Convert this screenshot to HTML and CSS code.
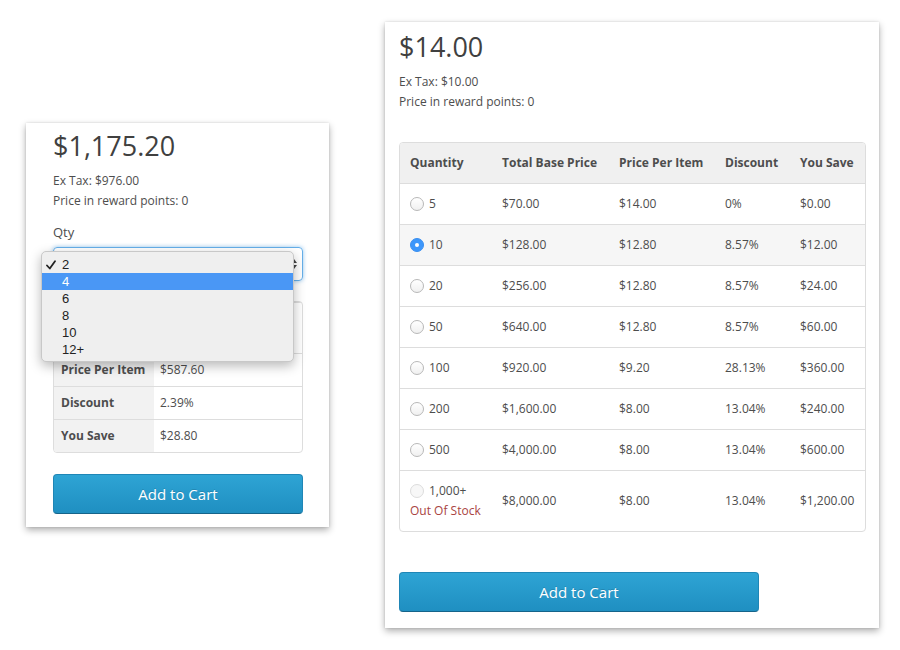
FILE: index.html
```html
<!DOCTYPE html>
<html>
<head>
<meta charset="utf-8">
<link rel="stylesheet" href="styles.css">
</head>
<body>
<div class="page">
  <div class="card card-left">
    <div class="price">$1,175.20</div>
    <div class="meta">Ex Tax: $976.00</div>
    <div class="meta">Price in reward points: 0</div>
    <div class="qty-label">Qty</div>
    <div class="select-wrap">
      <div class="select">
        <span class="select-val"></span>
        <svg class="select-arrows" width="8" height="12" viewBox="0 0 8 12"><path d="M4 1 L7 5 L1 5 Z M4 11 L7 7 L1 7 Z" fill="#444"/></svg>
      </div>
      <ul class="menu">
        <li class="menu-item"><svg class="check" width="10" height="10" viewBox="0 0 10 10"><path d="M1 5.5 L3.8 8.5 L9 1.2" fill="none" stroke="#222" stroke-width="1.8" stroke-linecap="round" stroke-linejoin="round"/></svg>2</li>
        <li class="menu-item active">4</li>
        <li class="menu-item">6</li>
        <li class="menu-item">8</li>
        <li class="menu-item">10</li>
        <li class="menu-item">12+</li>
      </ul>
    </div>
    <div class="tbl-wrap side-tbl">
      <table>
        <tr class="first"><th>Total Base Price</th><td>$1,204.00</td></tr>
        <tr><th>Price Per Item</th><td>$587.60</td></tr>
        <tr><th>Discount</th><td>2.39%</td></tr>
        <tr><th>You Save</th><td>$28.80</td></tr>
      </table>
    </div>
    <button class="btn btn-full">Add to Cart</button>
  </div>

  <div class="card card-right">
    <div class="price">$14.00</div>
    <div class="meta">Ex Tax: $10.00</div>
    <div class="meta">Price in reward points: 0</div>
    <div class="tbl-wrap tier-tbl">
      <table>
        <thead>
          <tr><th class="c1">Quantity</th><th class="c2">Total Base Price</th><th class="c3">Price Per Item</th><th class="c4">Discount</th><th class="c5">You Save</th></tr>
        </thead>
        <tbody>
          <tr><td><span class="q"><span class="radio"></span>5</span></td><td>$70.00</td><td>$14.00</td><td>0%</td><td>$0.00</td></tr>
          <tr class="sel"><td><span class="q"><span class="radio checked"></span>10</span></td><td>$128.00</td><td>$12.80</td><td>8.57%</td><td>$12.00</td></tr>
          <tr><td><span class="q"><span class="radio"></span>20</span></td><td>$256.00</td><td>$12.80</td><td>8.57%</td><td>$24.00</td></tr>
          <tr><td><span class="q"><span class="radio"></span>50</span></td><td>$640.00</td><td>$12.80</td><td>8.57%</td><td>$60.00</td></tr>
          <tr><td><span class="q"><span class="radio"></span>100</span></td><td>$920.00</td><td>$9.20</td><td>28.13%</td><td>$360.00</td></tr>
          <tr><td><span class="q"><span class="radio"></span>200</span></td><td>$1,600.00</td><td>$8.00</td><td>13.04%</td><td>$240.00</td></tr>
          <tr><td><span class="q"><span class="radio"></span>500</span></td><td>$4,000.00</td><td>$8.00</td><td>13.04%</td><td>$600.00</td></tr>
          <tr><td><span class="q"><span class="radio disabled"></span>1,000+</span><span class="oos">Out Of Stock</span></td><td>$8,000.00</td><td>$8.00</td><td>13.04%</td><td>$1,200.00</td></tr>
        </tbody>
      </table>
    </div>
    <button class="btn btn-wide">Add to Cart</button>
  </div>
</div>
</body>
</html>
```

FILE: styles.css
```css
* { box-sizing: border-box; }
html, body { margin: 0; padding: 0; background: #fff; }
body { font-family: "Open Sans", "DejaVu Sans", sans-serif; color: #4d4d4d; }

.page {
  display: flex;
  align-items: flex-start;
  padding-left: 26px;
  padding-bottom: 12px;
}

.card {
  background: #fff;
  box-shadow: 0 3px 7px rgba(0,0,0,0.32), 0 0 2px rgba(0,0,0,0.12);
}
.card-left {
  width: 303px;
  margin-top: 123px;
  padding: 6px 26px 13px 27px;
}
.card-right {
  width: 494px;
  margin-top: 22px;
  margin-left: 56px;
  padding: 8px 13px 16px 14px;
}

.price {
  font-size: 27px;
  line-height: 34px;
  color: #404040;
  margin-bottom: 8px;
}
.meta {
  font-size: 12px;
  line-height: 20px;
  color: #4d4d4d;
}
.qty-label {
  font-size: 13px;
  line-height: 20px;
  margin-top: 11px;
  color: #4d4d4d;
}

.select-wrap {
  position: relative;
  margin-top: 5px;
}
.select {
  height: 34px;
  border: 1px solid #66afe9;
  border-radius: 4px;
  box-shadow: 0 0 4px rgba(102,175,233,0.7);
  display: flex;
  align-items: center;
  justify-content: space-between;
  padding: 0 4px 0 12px;
  font-family: "Liberation Sans", sans-serif;
  font-size: 13px;
  color: #333;
}
.select-arrows { display: block; }

.menu {
  position: absolute;
  left: -12px;
  top: 4px;
  width: 253px;
  margin: 0;
  padding: 4px 0 3px;
  list-style: none;
  background: #efefef;
  border: 1px solid #c8c8c8;
  border-radius: 5px;
  box-shadow: 0 4px 12px rgba(0,0,0,0.28);
  font-family: "Liberation Sans", "Helvetica", sans-serif;
  font-size: 13px;
  color: #222;
}
.menu-item {
  position: relative;
  height: 17px;
  line-height: 17px;
  padding-left: 20px;
}
.menu-item.active {
  background: #4a97f5;
  color: #fff;
}
.check {
  position: absolute;
  left: 4px;
  top: 4px;
}

.tbl-wrap {
  border: 1px solid #ddd;
  border-radius: 4px;
  overflow: hidden;
}
table {
  width: 100%;
  border-collapse: collapse;
  font-size: 12px;
  line-height: 20px;
}
tr + tr, tbody tr { border-top: 1px solid #ddd; }

.side-tbl { margin-top: 20px; }
.side-tbl th {
  width: 100px;
  background: #f2f2f2;
  text-align: left;
  font-weight: 700;
  color: #4d4d4d;
  padding: 6px 7px;
  vertical-align: middle;
}
.side-tbl td {
  padding: 6px 6px;
  color: #4d4d4d;
  vertical-align: middle;
}
.side-tbl tr.first th, .side-tbl tr.first td { padding-top: 5px; padding-bottom: 5px; }

.tier-tbl { margin-top: 30px; }
.tier-tbl table { table-layout: fixed; }
.tier-tbl thead th {
  background: #f0f0f0;
  font-weight: 700;
  text-align: left;
  color: #4d4d4d;
  padding: 10px 10px;
}
.tier-tbl td {
  padding: 10px 10px;
  color: #4d4d4d;
  vertical-align: middle;
}
.tier-tbl .c1 { width: 92px; }
.tier-tbl .c2 { width: 117px; }
.tier-tbl .c3 { width: 106px; }
.tier-tbl .c4 { width: 75px; }
.tier-tbl tr.sel td { background: #f6f6f6; }

.q {
  display: flex;
  align-items: center;
  gap: 5px;
}
.radio {
  width: 14px;
  height: 14px;
  border-radius: 50%;
  border: 1px solid #b8b8b8;
  background: linear-gradient(#fff, #f0f0f0);
  flex: none;
  position: relative;
}
.radio.checked {
  border-color: #3a8ff0;
  background: #3d97fb;
}
.radio.checked::after {
  content: "";
  position: absolute;
  left: 4px;
  top: 4px;
  width: 4px;
  height: 4px;
  border-radius: 50%;
  background: #fff;
}
.radio.disabled {
  border-color: #dcdcdc;
  background: #f7f7f7;
}
.oos {
  display: block;
  color: #a94442;
}

.btn {
  display: block;
  height: 40px;
  border: 1px solid #1f86b6;
  border-bottom-color: #15648a;
  border-radius: 4px;
  background: linear-gradient(#2ea4d4, #1f8fc1);
  color: #fff;
  font-family: "Open Sans", sans-serif;
  font-size: 15px;
  text-shadow: 0 -1px 0 rgba(0,0,0,0.15);
  padding: 0;
}
.btn-full { width: 100%; margin-top: 21px; }
.btn-wide { width: 360px; margin-top: 40px; }
```
